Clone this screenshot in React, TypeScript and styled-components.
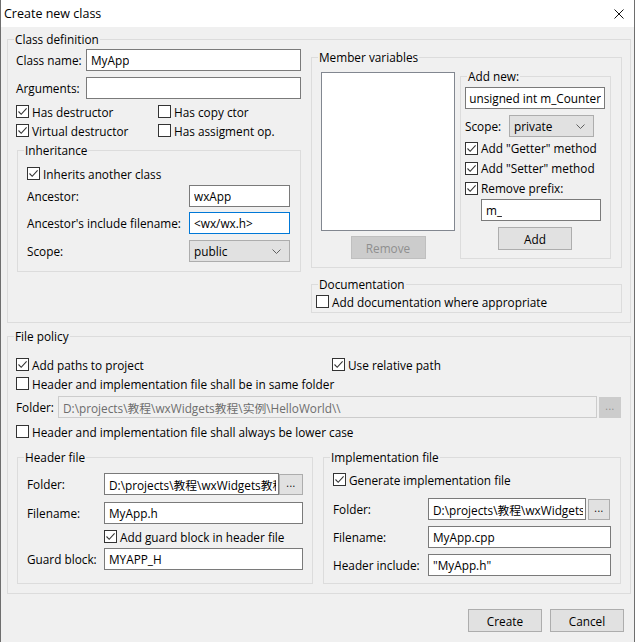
import React from "react";
import styled, { createGlobalStyle } from "styled-components";

const GlobalStyle = createGlobalStyle`
  html, body {
    margin: 0;
    padding: 0;
    background: #ffffff;
  }
  body {
    font-family: "Open Sans", "Noto Sans CJK SC", sans-serif;
    font-size: 11.8px;
    color: #000000;
  }
  * {
    box-sizing: border-box;
  }
`;

type CheckProps = {
  checked?: boolean;
  children: React.ReactNode;
  h?: number;
  indent?: number;
};

const CheckBox = ({ checked, children, h = 19, indent = 0 }: CheckProps) => (
  <CheckRow $h={h} $indent={indent}>
    <Box>
      {checked ? (
        <svg width="11" height="11" viewBox="0 0 11 11">
          <polyline
            points="1.5,5.5 4.2,8.3 9.6,2.4"
            fill="none"
            stroke="#333333"
            strokeWidth="1.1"
          />
        </svg>
      ) : null}
    </Box>
    <span>{children}</span>
  </CheckRow>
);

const Chevron = () => (
  <svg width="9" height="5" viewBox="0 0 9 5">
    <polyline points="0.5,0.5 4.5,4.5 8.5,0.5" fill="none" stroke="#606060" strokeWidth="1" />
  </svg>
);

const App = () => {
  return (
    <>
      <GlobalStyle />
      <Window>
        <TitleBar>
          <Title>Create new class</Title>
          <svg width="10" height="10" viewBox="0 0 10 10">
            <line x1="0.5" y1="0.5" x2="9.5" y2="9.5" stroke="#111" strokeWidth="1" />
            <line x1="9.5" y1="0.5" x2="0.5" y2="9.5" stroke="#111" strokeWidth="1" />
          </svg>
        </TitleBar>

        <Body>
          <Group>
            <Legend>Class definition</Legend>
            <Inner $pad="2px 8px 9px 8px">
              <Columns>
                <LeftCol>
                  <FieldRow>
                    <Label $w={70}>Class name:</Label>
                    <TextBox $w={215}>
                      <span>MyApp</span>
                    </TextBox>
                  </FieldRow>
                  <FieldRow $mt={6}>
                    <Label $w={70}>Arguments:</Label>
                    <TextBox $w={215} />
                  </FieldRow>
                  <CheckGrid $col={142} $mt={3}>
                    <CheckBox checked>Has destructor</CheckBox>
                    <CheckBox>Has copy ctor</CheckBox>
                    <CheckBox checked>Virtual destructor</CheckBox>
                    <CheckBox>Has assigment op.</CheckBox>
                  </CheckGrid>
                  <Group $w={284} $mt={3} $ml={1}>
                    <Legend>Inheritance</Legend>
                    <Inner $pad="6px 9px 9px 9px">
                      <CheckBox checked>Inherits another class</CheckBox>
                      <FieldRow $mt={2}>
                        <Label $w={162}>Ancestor:</Label>
                        <TextBox $w={101}>
                          <span>wxApp</span>
                        </TextBox>
                      </FieldRow>
                      <FieldRow $mt={5}>
                        <Label $w={162}>Ancestor's include filename:</Label>
                        <TextBox $w={101} $focused>
                          <span>&lt;wx/wx.h&gt;</span>
                        </TextBox>
                      </FieldRow>
                      <FieldRow $mt={6}>
                        <Label $w={162}>Scope:</Label>
                        <Combo $w={101}>
                          <span>public</span>
                          <Chevron />
                        </Combo>
                      </FieldRow>
                    </Inner>
                  </Group>
                </LeftCol>

                <RightCol>
                  <Group $mt={1}>
                    <Legend>Member variables</Legend>
                    <Inner $pad="3px 10px 8px 9px">
                      <MemberRow>
                        <ListCol>
                          <ListBox />
                          <Button $w={75} $mt={5} $disabled>
                            Remove
                          </Button>
                        </ListCol>
                        <Group $w={151} $mt={1}>
                          <Legend>Add new:</Legend>
                          <Inner $pad="3px 5px 8px 4px">
                            <TextBox $w={140} $alignEnd>
                              <span>unsigned int m_Counter</span>
                            </TextBox>
                            <FieldRow $mt={6}>
                              <Label $w={44}>Scope:</Label>
                              <Combo $w={85}>
                                <span>private</span>
                                <Chevron />
                              </Combo>
                            </FieldRow>
                            <Spacer $h={1} />
                            <CheckBox checked h={20}>
                              Add "Getter" method
                            </CheckBox>
                            <CheckBox checked h={20}>
                              Add "Setter" method
                            </CheckBox>
                            <CheckBox checked h={20}>
                              Remove prefix:
                            </CheckBox>
                            <TextBox $w={120} $mt={1} $ml={16}>
                              <span>m_</span>
                            </TextBox>
                            <Button $w={74} $mt={6} $ml={33}>
                              Add
                            </Button>
                          </Inner>
                        </Group>
                      </MemberRow>
                    </Inner>
                  </Group>
                  <Group $mt={9}>
                    <Legend>Documentation</Legend>
                    <Inner $pad="0 4px 1px 4px">
                      <CheckBox>Add documentation where appropriate</CheckBox>
                    </Inner>
                  </Group>
                </RightCol>
              </Columns>
            </Inner>
          </Group>

          <Group $mt={6}>
            <Legend>File policy</Legend>
            <Inner $pad="11px 8px 9px 8px">
              <CheckGrid $col={316}>
                <CheckBox checked>Add paths to project</CheckBox>
                <CheckBox checked>Use relative path</CheckBox>
              </CheckGrid>
              <CheckBox>Header and implementation file shall be in same folder</CheckBox>
              <FieldRow $mt={3}>
                <Label $w={42}>Folder:</Label>
                <TextBox $w={539} $disabled>
                  <span>D:\projects\教程\wxWidgets教程\实例\HelloWorld\\</span>
                </TextBox>
                <SmallButton $w={22} $ml={2} $disabled>
                  ...
                </SmallButton>
              </FieldRow>
              <Spacer $h={4} />
              <CheckBox>Header and implementation file shall always be lower case</CheckBox>

              <FilesRow>
                <Group $w={296}>
                  <Legend>Header file</Legend>
                  <Inner $pad="8px 9px 13px 9px">
                    <FieldRow>
                      <Label $w={77}>Folder:</Label>
                      <TextBox $w={175}>
                        <span>D:\projects\教程\wxWidgets教程\实例\HelloWorld\</span>
                      </TextBox>
                      <SmallButton $w={24}>...</SmallButton>
                    </FieldRow>
                    <FieldRow $mt={7}>
                      <Label $w={77}>Filename:</Label>
                      <TextBox $w={199}>
                        <span>MyApp.h</span>
                      </TextBox>
                    </FieldRow>
                    <Spacer $h={3} />
                    <CheckBox checked indent={77}>
                      Add guard block in header file
                    </CheckBox>
                    <FieldRow $mt={2}>
                      <Label $w={77}>Guard block:</Label>
                      <TextBox $w={199}>
                        <span>MYAPP_H</span>
                      </TextBox>
                    </FieldRow>
                  </Inner>
                </Group>
                <Group $grow>
                  <Legend>Implementation file</Legend>
                  <Inner $pad="5px 9px 7px 9px">
                    <CheckBox checked>Generate implementation file</CheckBox>
                    <FieldRow $mt={9}>
                      <Label $w={95}>Folder:</Label>
                      <TextBox $w={158}>
                        <span>D:\projects\教程\wxWidgets教程\实例\HelloWorld\</span>
                      </TextBox>
                      <SmallButton $w={22} $ml={2}>
                        ...
                      </SmallButton>
                    </FieldRow>
                    <FieldRow $mt={6}>
                      <Label $w={95}>Filename:</Label>
                      <TextBox $w={183}>
                        <span>MyApp.cpp</span>
                      </TextBox>
                    </FieldRow>
                    <FieldRow $mt={6}>
                      <Label $w={95}>Header include:</Label>
                      <TextBox $w={183}>
                        <span>"MyApp.h"</span>
                      </TextBox>
                    </FieldRow>
                  </Inner>
                </Group>
              </FilesRow>
            </Inner>
          </Group>

          <Footer>
            <Button $w={74}>Create</Button>
            <Button $w={74}>Cancel</Button>
          </Footer>
        </Body>
      </Window>
    </>
  );
};

const Window = styled("div")`
  width: 635px;
  height: 642px;
  background: #f0f0f0;
  border-left: 1px solid #6e6e6e;
  border-right: 1px solid #6e6e6e;
  display: flex;
  flex-direction: column;
  overflow: hidden;
`;

const TitleBar = styled("div")`
  height: 27px;
  flex: none;
  background: #ffffff;
  display: flex;
  align-items: center;
  justify-content: space-between;
  padding: 0 10px 0 3px;
`;

const Title = styled("div")`
  font-size: 12.5px;
  color: #000000;
`;

const Body = styled("div")`
  display: flex;
  flex-direction: column;
  padding: 5px 3px 0 6px;
`;

const Group = styled("fieldset")<{ $w?: number; $mt?: number; $ml?: number; $grow?: boolean }>`
  margin: ${(p) => p.$mt ?? 0}px 0 0 ${(p) => p.$ml ?? 0}px;
  padding: 0;
  min-width: 0;
  border: 1px solid #dcdcdc;
  width: ${(p) => (p.$w ? `${p.$w}px` : "auto")};
  flex: ${(p) => (p.$grow ? "1 1 0" : "none")};
`;

const Legend = styled("legend")`
  margin-left: 6px;
  padding: 0 1px;
  height: 15px;
  line-height: 15px;
  white-space: nowrap;
`;

const Inner = styled("div")<{ $pad: string }>`
  display: flex;
  flex-direction: column;
  align-items: flex-start;
  padding: ${(p) => p.$pad};
`;

const Columns = styled("div")`
  display: flex;
  gap: 10px;
  align-items: flex-start;
`;

const LeftCol = styled("div")`
  width: 285px;
  display: flex;
  flex-direction: column;
`;

const RightCol = styled("div")`
  width: 311px;
  display: flex;
  flex-direction: column;
`;

const MemberRow = styled("div")`
  display: flex;
  gap: 5px;
  align-items: flex-start;
`;

const ListCol = styled("div")`
  width: 134px;
  display: flex;
  flex-direction: column;
  align-items: center;
`;

const ListBox = styled("div")`
  width: 134px;
  height: 159px;
  margin-top: 4px;
  background: #ffffff;
  border: 1px solid #828790;
`;

const FieldRow = styled("div")<{ $mt?: number }>`
  display: flex;
  align-items: center;
  margin-top: ${(p) => p.$mt ?? 0}px;
`;

const Label = styled("div")<{ $w: number }>`
  width: ${(p) => p.$w}px;
  flex: none;
  white-space: nowrap;
`;

const TextBox = styled("div")<{
  $w: number;
  $mt?: number;
  $ml?: number;
  $focused?: boolean;
  $disabled?: boolean;
  $alignEnd?: boolean;
}>`
  width: ${(p) => p.$w}px;
  height: 22px;
  flex: none;
  margin: ${(p) => p.$mt ?? 0}px 0 0 ${(p) => p.$ml ?? 0}px;
  display: flex;
  align-items: center;
  justify-content: ${(p) => (p.$alignEnd ? "flex-end" : "flex-start")};
  padding: 0 ${(p) => (p.$alignEnd ? 3 : 2)}px 0 4px;
  background: ${(p) => (p.$disabled ? "#f0f0f0" : "#ffffff")};
  border: 1px solid ${(p) => (p.$focused ? "#0078d7" : p.$disabled ? "#cccccc" : "#7a7a7a")};
  color: ${(p) => (p.$disabled ? "#6d6d6d" : "#000000")};
  white-space: nowrap;
  overflow: hidden;

  span {
    flex: ${(p) => (p.$alignEnd ? "none" : "0 1 auto")};
    min-width: 0;
    overflow: hidden;
  }
`;

const Combo = styled("div")<{ $w: number }>`
  width: ${(p) => p.$w}px;
  height: 22px;
  flex: none;
  display: flex;
  align-items: center;
  justify-content: space-between;
  padding: 0 8px 0 4px;
  background: #e1e1e1;
  border: 1px solid #adadad;
`;

const Button = styled("div")<{ $w: number; $mt?: number; $ml?: number; $disabled?: boolean }>`
  width: ${(p) => p.$w}px;
  height: 23px;
  flex: none;
  margin: ${(p) => p.$mt ?? 0}px 0 0 ${(p) => p.$ml ?? 0}px;
  display: flex;
  align-items: center;
  justify-content: center;
  background: ${(p) => (p.$disabled ? "#cccccc" : "#e1e1e1")};
  border: 1px solid ${(p) => (p.$disabled ? "#bfbfbf" : "#adadad")};
  color: ${(p) => (p.$disabled ? "#8f8f8f" : "#000000")};
`;

const SmallButton = styled("div")<{ $w: number; $ml?: number; $disabled?: boolean }>`
  width: ${(p) => p.$w}px;
  height: 21px;
  flex: none;
  margin-left: ${(p) => p.$ml ?? 0}px;
  display: flex;
  align-items: center;
  justify-content: center;
  padding-bottom: 3px;
  font-size: 10px;
  letter-spacing: 0.5px;
  background: ${(p) => (p.$disabled ? "#cccccc" : "#e1e1e1")};
  border: 1px solid ${(p) => (p.$disabled ? "#cccccc" : "#adadad")};
  color: ${(p) => (p.$disabled ? "#8d8d8d" : "#000000")};
`;

const CheckGrid = styled("div")<{ $col: number; $mt?: number }>`
  display: grid;
  grid-template-columns: ${(p) => p.$col}px 1fr;
  grid-auto-rows: 19px;
  margin-top: ${(p) => p.$mt ?? 0}px;
`;

const CheckRow = styled("div")<{ $h: number; $indent: number }>`
  height: ${(p) => p.$h}px;
  display: flex;
  align-items: center;
  margin-left: ${(p) => p.$indent}px;
  white-space: nowrap;
`;

const Box = styled("span")`
  width: 13px;
  height: 13px;
  flex: none;
  margin-right: 3px;
  background: #ffffff;
  border: 1px solid #333333;
  display: flex;
  align-items: center;
  justify-content: center;
`;

const Spacer = styled("div")<{ $h: number }>`
  height: ${(p) => p.$h}px;
  flex: none;
`;

const FilesRow = styled("div")`
  display: flex;
  gap: 10px;
  align-items: stretch;
  align-self: stretch;
  margin-top: 9px;
  padding: 0 1px;
`;

const Footer = styled("div")`
  display: flex;
  justify-content: flex-end;
  gap: 8px;
  margin-top: 15px;
  padding-right: 7px;
`;

export default App;
